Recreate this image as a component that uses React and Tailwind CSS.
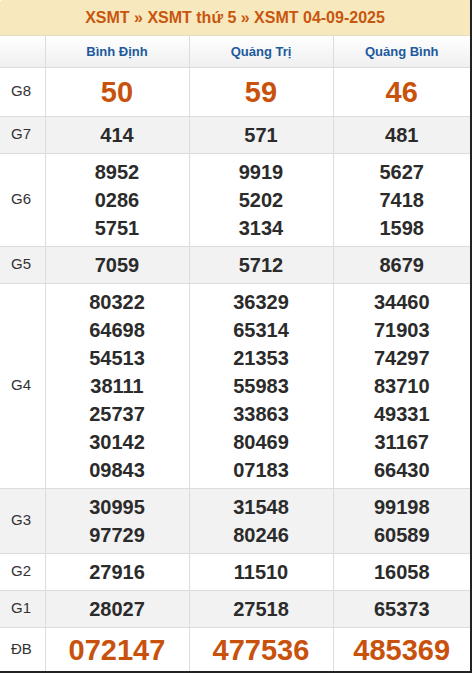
const provinces = ["Bình Định", "Quảng Trị", "Quảng Bình"];

const rows = [
  { label: "G8", big: true, vals: [["50"], ["59"], ["46"]] },
  { label: "G7", vals: [["414"], ["571"], ["481"]] },
  { label: "G6", vals: [["8952", "0286", "5751"], ["9919", "5202", "3134"], ["5627", "7418", "1598"]] },
  { label: "G5", vals: [["7059"], ["5712"], ["8679"]] },
  {
    label: "G4",
    vals: [
      ["80322", "64698", "54513", "38111", "25737", "30142", "09843"],
      ["36329", "65314", "21353", "55983", "33863", "80469", "07183"],
      ["34460", "71903", "74297", "83710", "49331", "31167", "66430"],
    ],
  },
  { label: "G3", vals: [["30995", "97729"], ["31548", "80246"], ["99198", "60589"]] },
  { label: "G2", vals: [["27916"], ["11510"], ["16058"]] },
  { label: "G1", vals: [["28027"], ["27518"], ["65373"]] },
  { label: "ĐB", big: true, db: true, vals: [["072147"], ["477536"], ["485369"]] },
];

export default function App() {
  return (
    <div className="w-[472px] h-[673px] bg-white font-['Liberation_Sans',Arial,sans-serif] border-r-2 border-b-2 border-[#222] overflow-hidden">
      <div className="h-[36px] bg-[#f7e9bd] rounded-tl-[3px] flex items-center justify-center text-[16px] font-bold text-[#c8560f] border-b border-[#e6dcc0]">
        XSMT » XSMT thứ 5 » XSMT 04-09-2025
      </div>
      <table className="w-[470px] table-fixed border-collapse">
        <colgroup>
          <col className="w-[45px]" />
          <col className="w-[144px]" />
          <col className="w-[144px]" />
          <col />
        </colgroup>
        <thead>
          <tr className="h-[31px] bg-gradient-to-b from-white to-[#efefef]">
            <th className="border-r border-[#dcdcdc]"></th>
            {provinces.map((p) => (
              <th key={p} className="border-r border-[#dcdcdc] last:border-r-0 text-[13px] font-bold text-[#1c5a9e]">
                {p}
              </th>
            ))}
          </tr>
        </thead>
        <tbody>
          {rows.map((r, i) => (
            <tr key={r.label} className={`${i % 2 === 1 ? "bg-[#f2f2f2]" : "bg-white"} border-t border-[#dcdcdc]`}>
              <td className="text-[15px] text-[#333] pl-[11px] border-r border-[#dcdcdc]">{r.label}</td>
              {r.vals.map((v, j) => (
                <td
                  key={j}
                  className={`text-center font-bold py-1 border-r border-[#dcdcdc] last:border-r-0 ${
                    r.big
                      ? r.db
                        ? "text-[29px] leading-[36px] text-[#c8520c]"
                        : "text-[29px] leading-[40px] text-[#c8520c]"
                      : "text-[20px] leading-[28px] text-[#2b2b2b]"
                  }`}
                >
                  {v.map((n) => (
                    <div key={n}>{n}</div>
                  ))}
                </td>
              ))}
            </tr>
          ))}
        </tbody>
      </table>
    </div>
  );
}
